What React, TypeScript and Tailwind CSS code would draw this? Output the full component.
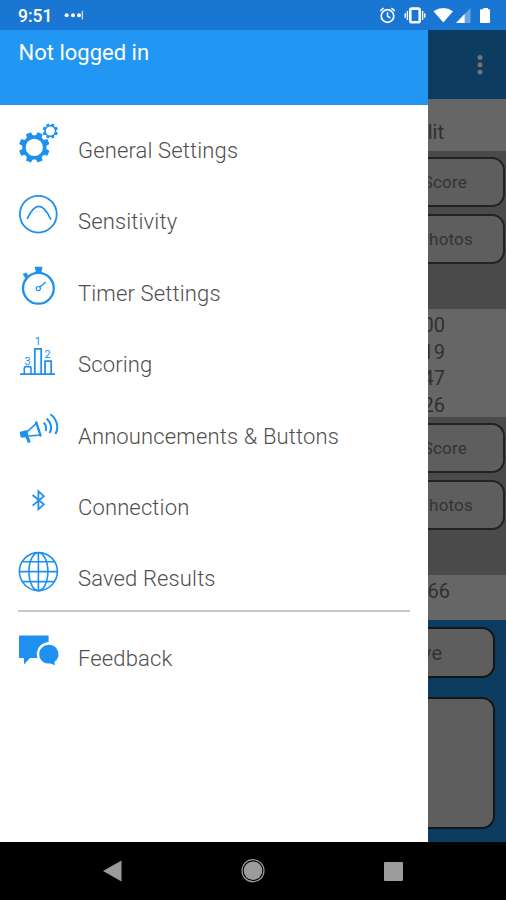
import React from "react";

const BLUE = "#1e90f0";

function gearPath(cx: number, cy: number, outer: number, root: number, teeth: number) {
  const step = (Math.PI * 2) / teeth;
  const pts: string[] = [];
  for (let i = 0; i < teeth; i++) {
    const a = i * step + step / 2;
    [
      [root, -0.33],
      [outer, -0.22],
      [outer, 0.22],
      [root, 0.33],
    ].forEach(([r, o]) => {
      pts.push(`${(cx + r * Math.cos(a + o * step)).toFixed(2)} ${(cy + r * Math.sin(a + o * step)).toFixed(2)}`);
    });
  }
  return `M${pts.join("L")}Z`;
}

function Icon({ children }: { children: React.ReactNode }) {
  return (
    <svg
      width="42"
      height="42"
      viewBox="0 0 42 42"
      fill="none"
      stroke={BLUE}
      strokeWidth="1.6"
      className="shrink-0 overflow-visible"
    >
      {children}
    </svg>
  );
}

const GearsIcon = () => (
  <Icon>
    <path d={gearPath(16.3, 23.4, 15.5, 12.2, 8)} fill={BLUE} stroke="none" />
    <circle cx="16.3" cy="23.4" r="8.6" fill="#fff" stroke="none" />
    <path d={gearPath(32.3, 7, 7.8, 6, 8)} fill={BLUE} stroke="none" />
    <circle cx="32.3" cy="7" r="4.5" fill="#fff" stroke="none" />
  </Icon>
);

const SensitivityIcon = () => (
  <Icon>
    <circle cx="20.3" cy="19.2" r="18.4" strokeWidth="1.8" />
    <path d="M9.2 23.8C12.5 16.7 16.5 11.4 20.8 11.4S29.5 17.2 33 24.6" />
    <path d="M12 20C16 16 25 15 30 18" strokeWidth="1" strokeDasharray="1 1.5" opacity="0.4" />
  </Icon>
);

const TimerIcon = () => (
  <Icon>
    <circle cx="20.4" cy="21.3" r="15.4" strokeWidth="2.3" />
    <path d="M16.7 -0.2H24.5L23.3 6H17.9Z" fill={BLUE} stroke="none" />
    <path d="M4.6 7L8.2 5.4L10.2 8.4L7.3 11.2Z" fill={BLUE} stroke="none" />
    <circle cx="20.3" cy="21.6" r="2.1" strokeWidth="1.2" />
    <path d="M21.5 20.2L27.8 15" strokeWidth="1.4" />
  </Icon>
);

const ScoringIcon = () => (
  <Icon>
    <path d="M2 36.2H37" strokeWidth="1.8" />
    <path d="M16.8 36V10.8H23.2V36" strokeWidth="1.8" />
    <path d="M27 36V23.2H33.2V36" strokeWidth="1.8" />
    <path d="M6.3 36V30.2Q6.3 28.6 8 28.6H11.2Q13 28.6 13 30.2V36" strokeWidth="1.6" />
    <g fill={BLUE} stroke="none" fontFamily="Roboto, sans-serif" fontSize="11" textAnchor="middle">
      <text x="19.8" y="7.4">1</text>
      <text x="29.5" y="20.4">2</text>
      <text x="9.6" y="27">3</text>
    </g>
  </Icon>
);

const MegaphoneIcon = () => (
  <Icon>
    <path
      d="M1.8 23.2Q1.6 21.8 3 21.5L9.5 20L10.6 26.2L12.6 31.6Q11.6 33.2 9.8 32.8L7.5 27.2L4 27.8Q2.4 27.8 1.8 23.2Z"
      fill={BLUE}
      stroke="none"
    />
    <path d="M9.5 21.5L18.6 13L22.4 25L10.5 26" strokeWidth="1.7" />
    <path d="M18 11.5L22.8 26.5" strokeWidth="2.2" />
    <path d="M25.6 12.5C28 14.5 28.8 18.5 27.4 21" strokeWidth="2" />
    <path d="M28.6 8.6C33 12 34.5 18.5 31.6 23" strokeWidth="2" />
    <path d="M32.4 4.2C39 9 41.2 17.5 37.4 24" strokeWidth="2" />
  </Icon>
);

const BluetoothIcon = () => (
  <Icon>
    <path d="M14.6 14L25.8 23.4L20.4 28.3V10.3L25.8 15.2L14.6 24.6" strokeWidth="1.8" />
  </Icon>
);

const GlobeIcon = () => (
  <Icon>
    <circle cx="20.4" cy="19.6" r="19" />
    <ellipse cx="20.4" cy="19.6" rx="9.5" ry="19" />
    <path d="M20.4 0.8V38.6M1.4 19.6H39.4M4.6 9.8H36.2M4.6 29.6H36.2" />
  </Icon>
);

const FeedbackIcon = () => (
  <Icon>
    <path d="M1 3.4H30.6V26H12L6 32.6V26H1Z" fill={BLUE} stroke="none" />
    <circle cx="31" cy="22.2" r="12.2" fill="#fff" stroke="none" />
    <path d="M31 12.8a9.4 9.4 0 0 1 5.4 17.1L37 33.2L32.5 31.4A9.4 9.4 0 1 1 31 12.8Z" fill={BLUE} stroke="none" />
  </Icon>
);

const menu = [
  { label: "General Settings", icon: <GearsIcon /> },
  { label: "Sensitivity", icon: <SensitivityIcon /> },
  { label: "Timer Settings", icon: <TimerIcon /> },
  { label: "Scoring", icon: <ScoringIcon /> },
  { label: "Announcements & Buttons", icon: <MegaphoneIcon /> },
  { label: "Connection", icon: <BluetoothIcon /> },
  { label: "Saved Results", icon: <GlobeIcon /> },
];

function MenuItem({ label, icon }: { label: string; icon: React.ReactNode }) {
  return (
    <li className="flex h-[71.4px] items-start pl-[18px]">
      {icon}
      <span className="ml-[18px] mt-3 text-[22px] leading-[30px] font-light tracking-[0.14px] text-[#505050]">
        {label}
      </span>
    </li>
  );
}

function StatusBar() {
  return (
    <header className="flex h-[30px] items-center bg-[#1976d2] pl-[18px] pr-4 text-white">
      <span className="pt-0.5 text-[17.5px] leading-5 font-medium">9:51</span>
      <svg width="20" height="10" viewBox="0 0 20 10" fill="#fff" className="ml-3">
        <circle cx="2.6" cy="5.2" r="2" />
        <circle cx="9" cy="5.2" r="2" />
        <circle cx="15" cy="5.2" r="2" />
        <path d="M17.6 1h1.5v8.4h-1.5z" opacity="0.7" />
      </svg>
      <svg width="112" height="18" viewBox="0 0 112 18" className="ml-auto" fill="#fff">
        <g fill="none" stroke="#fff" strokeWidth="1.7">
          <circle cx="9.5" cy="10" r="6.3" />
          <path d="M9.5 6.2v4l2.8 1.8M2.2 4.8L5.6 2M16.8 4.8L13.4 2" strokeWidth="1.5" />
          <rect x="32.3" y="2.6" width="9.4" height="13.6" rx="1.5" strokeWidth="2.6" />
          <path d="M29.4 5v9M44.6 5v9M27.2 7.3v4.4M46.8 7.3v4.4" strokeWidth="1.4" />
        </g>
        <path d="M55.5 5.2Q65.3-1 75 5.2L65.3 16.5Z" />
        <path d="M92.5 2v15H78z" opacity="0.35" />
        <path d="M86.6 8.1V17H78z" />
        <path d="M103 3.2h2.4V2h4.6v1.2h1.4q.6 0 .6.8V16q0 1-.8 1h-8.4q-.8 0-.8-1V4q0-.8 1-.8z" />
      </svg>
    </header>
  );
}

function ListButton({ children }: { children: React.ReactNode }) {
  return (
    <div className="mr-px flex h-[50px] w-40 shrink-0 items-center justify-end rounded-[13px] border-2 border-[#222] bg-[#5e5e5e] pt-0.5 text-[17px] tracking-[0.2px] text-[#333]">
      {children}
    </div>
  );
}

function ButtonPair() {
  return (
    <div className="flex h-[158px] flex-col items-end gap-[7px] bg-[#4a4a4a] pt-1.5">
      <ListButton>
        <span className="pr-9">Score</span>
      </ListButton>
      <ListButton>
        <span className="pr-[30px]">Photos</span>
      </ListButton>
    </div>
  );
}

function DimmedScreen() {
  return (
    <section className="flex flex-1 flex-col overflow-hidden bg-[#0d3c61] text-[#303030]">
      <div className="flex h-[69px] items-center justify-end pr-[23px]">
        <svg width="6" height="20" viewBox="0 0 6 20" fill="#737373">
          <circle cx="3" cy="2.6" r="2.5" />
          <circle cx="3" cy="9.8" r="2.5" />
          <circle cx="3" cy="17" r="2.5" />
        </svg>
      </div>
      <div className="flex h-[52px] items-end justify-end bg-[#666] pr-[62px] pb-[7px] text-xl leading-6">Split</div>
      <ButtonPair />
      <div className="flex h-[108px] flex-col items-end bg-[#666] pr-[61px] pt-[3px] text-xl leading-[26.6px]">
        <span>00</span>
        <span>19</span>
        <span>47</span>
        <span>26</span>
      </div>
      <ButtonPair />
      <div className="flex h-[45px] items-start justify-end bg-[#666] pr-[56px] pt-1 text-xl leading-6">66</div>
      <div className="flex flex-1 flex-col items-end gap-[19px] pr-[11px] pt-[7px]">
        <div className="flex h-[51px] w-40 shrink-0 items-center justify-end rounded-[13px] border-2 border-[#151515] bg-[#5e5e5e] pr-[51px] text-xl text-[#333]">
          Save
        </div>
        <div className="h-[132px] w-40 shrink-0 rounded-[13px] border-2 border-[#151515] bg-[#5e5e5e]" />
      </div>
    </section>
  );
}

function NavBar() {
  return (
    <footer className="flex h-[58px] items-center justify-between bg-black pl-[102px] pr-[103px]">
      <svg width="20" height="24" viewBox="0 0 20 24" fill="#9b9b9b">
        <path d="M1 12L19.5 1.5V22.5Z" />
      </svg>
      <svg width="24" height="24" viewBox="0 0 24 24" fill="#9b9b9b">
        <circle cx="12" cy="11.7" r="9.3" />
        <circle cx="12" cy="11.7" r="11" fill="none" stroke="#9b9b9b" strokeWidth="1.2" />
      </svg>
      <div className="size-[19px] rounded-[1px] bg-[#9b9b9b]" />
    </footer>
  );
}

export default function App() {
  return (
    <main className="flex h-[900px] w-[506px] flex-col overflow-hidden font-['Roboto',sans-serif]">
      <StatusBar />
      <div className="flex h-[812px]">
        <aside className="w-[428px] shrink-0 bg-white">
          <div className="h-[74.5px] bg-[#2196f3] pl-[18.5px] pt-2 text-[22px] leading-[30px] text-white">
            Not logged in
          </div>
          <ul className="pt-[19.5px]">
            {menu.map((item) => (
              <MenuItem key={item.label} {...item} />
            ))}
          </ul>
          <hr className="mx-[18px] -mt-[13.5px] border-t-2 border-[#c8c8c8]" />
          <ul className="pt-5">
            <MenuItem label="Feedback" icon={<FeedbackIcon />} />
          </ul>
        </aside>
        <DimmedScreen />
      </div>
      <NavBar />
    </main>
  );
}
